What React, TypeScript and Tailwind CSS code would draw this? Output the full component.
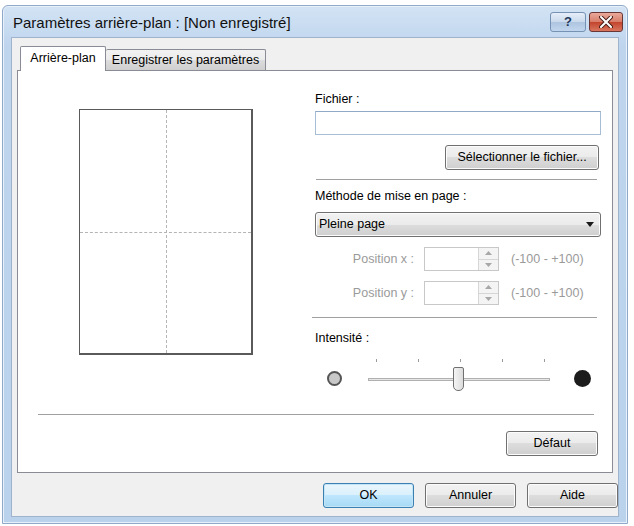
import React from "react";

function WinButton({ children, className = "", primary = false }: { children: React.ReactNode; className?: string; primary?: boolean }) {
  return (
    <div
      className={
        "flex items-center justify-center rounded-[3px] border text-black " +
        (primary
          ? "border-[#3c7fb1] bg-[linear-gradient(#eaf6fd,#d9f0fc_50%,#bee6fd_50%,#a7d9f5)] shadow-[inset_0_0_0_1px_#c4e5f6] "
          : "border-[#707070] bg-[linear-gradient(#f2f2f2,#ebebeb_50%,#dddddd_50%,#cfcfcf)] shadow-[inset_0_0_0_1px_#fcfcfc] ") +
        className
      }
    >
      {children}
    </div>
  );
}

function Separator({ className = "" }: { className?: string }) {
  return <div className={"h-[2px] border-t border-[#a0a0a0] border-b-white " + className} />;
}

function SpinRow({ label }: { label: string }) {
  return (
    <div className="flex h-[24px] items-center text-[#9a9a9a]">
      <div className="w-[100px] pr-[1px] text-right">{label}</div>
      <div className="ml-[9px] flex h-[24px] w-[75px] border border-[#c8c8c8] bg-white">
        <div className="flex-1" />
        <div className="flex w-[20px] flex-col border-l border-[#d6d6d6] bg-[#f4f4f4]">
          <div className="flex flex-1 items-center justify-center border-b border-[#d6d6d6]">
            <svg width="7" height="4" viewBox="0 0 7 4"><path d="M0 4 L3.5 0 L7 4 Z" fill="#a8a8a8" /></svg>
          </div>
          <div className="flex flex-1 items-center justify-center">
            <svg width="7" height="4" viewBox="0 0 7 4"><path d="M0 0 L3.5 4 L7 0 Z" fill="#a8a8a8" /></svg>
          </div>
        </div>
      </div>
      <div className="ml-[12px]">(-100 - +100)</div>
    </div>
  );
}

export default function App() {
  const ticks = [0, 1, 2, 3, 4];
  return (
    <div className="relative h-[526px] w-[634px] overflow-hidden bg-white font-['Liberation_Sans',Arial,sans-serif] text-[12.5px] text-black">
      <div className="ml-[2px] mt-[5px] flex h-[519px] w-[626px] flex-col rounded-t-[6px] border border-[#8ea9c9] bg-[linear-gradient(#d3e3f4,#bfd5ee_40px,#bad2ec)] px-[8px] pb-[6px] shadow-[inset_0_0_0_1px_#e8f0fa]">
        {/* Title bar */}
        <div className="flex h-[31px] items-center">
          <div className="pl-[2px] pt-[3px] text-[15px] text-[#111]">Paramètres arrière-plan : [Non enregistré]</div>
          <div className="ml-auto mr-[-4px] mt-[1px] flex items-start gap-[3px]">
            <div className="flex h-[20px] w-[36px] items-center justify-center rounded-[3px] border border-[#7591b3] bg-[linear-gradient(#e6eef8,#c9d9ec_50%,#adc4df_50%,#c2d6ee)] text-[13px] font-bold text-[#23375a]">
              ?
            </div>
            <div className="flex h-[20px] w-[34px] items-center justify-center rounded-[3px] border border-[#6a3535] bg-[linear-gradient(#e9a99b,#d77c68_50%,#c2432c_50%,#d9765f)]">
              <svg width="14" height="12" viewBox="0 0 14 12">
                <path d="M2 1 L12 11 M12 1 L2 11" stroke="#4a1e1a" strokeWidth="4" strokeLinecap="round" />
                <path d="M2 1 L12 11 M12 1 L2 11" stroke="#ffffff" strokeWidth="2" strokeLinecap="round" />
              </svg>
            </div>
          </div>
        </div>
        {/* Client area */}
        <div className="flex flex-1 flex-col border border-[#9fb4cc] bg-[#f0f0f0] px-[5px] pt-[8px]">
          {/* Tabs */}
          <div className="relative z-10 flex h-[24px] items-end pl-[3px]">
            <div className="mb-[-1px] flex h-[25px] w-[86px] items-center justify-center rounded-t-[2px] border border-b-0 border-[#898c95] bg-white pb-[2px]">
              Arrière-plan
            </div>
            <div className="flex h-[21px] w-[160px] items-center justify-center rounded-t-[2px] border border-b-0 border-l-0 border-[#898c95] bg-[linear-gradient(#f2f2f2,#ebebeb_50%,#dddddd_50%,#cfcfcf)]">
              Enregistrer les paramètres
            </div>
          </div>
          {/* Panel */}
          <div className="flex h-[403px] flex-col border border-[#898c95] bg-white">
            <div className="flex h-[340px]">
              {/* Preview */}
              <div className="w-[297px] pl-[61px] pt-[38px]">
                <div className="relative h-[246px] w-[174px] border border-[#5a5a5a] border-b-[2px] border-r-[2px]">
                  <div className="absolute bottom-0 left-[86px] top-0 border-l border-dashed border-[#b4b4b4]" />
                  <div className="absolute left-0 right-0 top-[122px] border-t border-dashed border-[#b4b4b4]" />
                </div>
              </div>
              {/* Controls */}
              <div className="flex w-[286px] flex-col pt-[21px]">
                <div className="h-[15px] leading-[15px]">Fichier :</div>
                <div className="mt-[4px] h-[24px] border border-[#a7bdd6] border-t-[#8fa9c7] bg-white" />
                <WinButton className="mr-[2px] mt-[10px] h-[25px] w-[154px] self-end">Sélectionner le fichier...</WinButton>
                <Separator className="ml-[1px] mr-[4px] mt-[9px]" />
                <div className="mt-[8px] h-[15px] leading-[15px]">Méthode de mise en page :</div>
                <div className="mt-[8px] flex h-[25px] items-center justify-between rounded-[3px] border border-[#707070] bg-[linear-gradient(#f2f2f2,#ebebeb_50%,#dddddd_50%,#cfcfcf)] pl-[3px] pr-[6px] shadow-[inset_0_0_0_1px_#fcfcfc]">
                  <span>Pleine page</span>
                  <svg width="8" height="5" viewBox="0 0 8 5"><path d="M0 0 L8 0 L4 5 Z" fill="#1a1a1a" /></svg>
                </div>
                <div className="mt-[10px]">
                  <SpinRow label="Position x :" />
                </div>
                <div className="mt-[10px]">
                  <SpinRow label="Position y :" />
                </div>
                <Separator className="ml-[-3px] mr-[4px] mt-[12px]" />
                <div className="mt-[12px] h-[15px] leading-[15px]">Intensité :</div>
                <div className="mt-[12px] flex h-[40px] items-start">
                  <div className="mt-[13px] ml-[12px] h-[15px] w-[15px] rounded-full border-[2px] border-[#555] bg-[#c8c8c8]" />
                  <div className="relative ml-[26px] h-[40px] w-[182px]">
                    {ticks.map((t) => (
                      <div key={t} className="absolute top-[1px] h-[3px] w-[1px] bg-[#9a9a9a]" style={{ left: 8 + t * 42 }} />
                    ))}
                    <div className="absolute left-0 right-0 top-[20px] h-[3px] border border-[#b0b0b0] bg-[#e6e6e6]" />
                    <div className="absolute left-[85px] top-[9px] h-[24px] w-[11px] rounded-t-[2px] rounded-b-[5px] border border-[#707070] bg-[linear-gradient(90deg,#f4f4f4,#dcdcdc)]" />
                  </div>
                  <div className="ml-[24px] mt-[12px] h-[17px] w-[17px] rounded-full bg-[#1c1c1c]" />
                </div>
              </div>
            </div>
            <Separator className="ml-[20px] mr-[18px] mt-[3px]" />
            <div className="mr-[14px] mt-[15px] flex justify-end">
              <WinButton className="h-[25px] w-[92px]">Défaut</WinButton>
            </div>
          </div>
          {/* Bottom buttons */}
          <div className="mr-[-5px] mt-[10px] flex justify-end gap-[11px]">
            <WinButton primary className="h-[25px] w-[91px]">OK</WinButton>
            <WinButton className="h-[25px] w-[91px]">Annuler</WinButton>
            <WinButton className="h-[25px] w-[91px]">Aide</WinButton>
          </div>
        </div>
      </div>
    </div>
  );
}
